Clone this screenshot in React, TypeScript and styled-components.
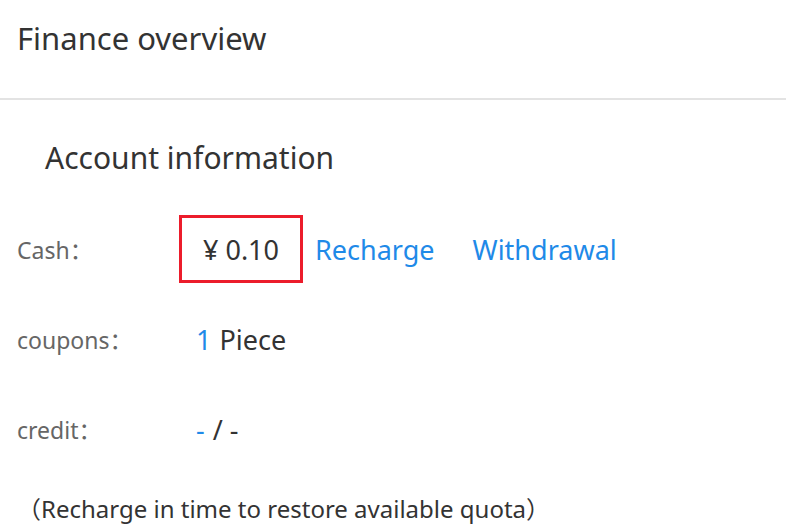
import React from "react";
import styled, { createGlobalStyle } from "styled-components";

const Global = createGlobalStyle`
  html, body { margin: 0; padding: 0; background: #fff; }
  body { font-family: "Noto Sans", "Noto Sans CJK SC", sans-serif; color: #333; }
`;

const Page = styled.div`
  width: 786px;
  height: 528px;
  overflow: hidden;
  background: #fff;
`;

const Header = styled.header`
  height: 100px;
  display: flex;
  align-items: center;
  padding-left: 17px;
  border-bottom: 2px solid #e3e3e3;
  box-sizing: border-box;
`;

const PageTitle = styled.h1`
  margin: -23px 0 0;
  font-size: 31px;
  font-weight: 400;
  color: #333;
`;

const Section = styled.section`
  padding: 0 17px;
`;

const SectionTitle = styled.h2`
  margin: 0;
  padding: 38px 0 0 28px;
  height: 80px;
  box-sizing: border-box;
  font-size: 30px;
  font-weight: 400;
  color: #333;
  line-height: 40px;
`;

const Rows = styled.div`
  padding-top: 24px;
`;

const Row = styled.div`
  display: grid;
  grid-template-columns: 179px 1fr;
  align-items: center;
  height: 90px;
`;

const Label = styled.span`
  font-size: 23px;
  color: #666;
`;

const Values = styled.div`
  display: flex;
  align-items: center;
  font-size: 27px;
  color: #333;
`;

const CashBox = styled.span`
  display: inline-flex;
  align-items: center;
  justify-content: center;
  width: 124px;
  height: 68px;
  box-sizing: border-box;
  border: 3px solid #ec1c2b;
  font-size: 27px;
  color: #333;
  margin-left: -17px;
  margin-right: 12px;
`;

const Link = styled.a<{ $gap?: number }>`
  color: #1f8ae8;
  text-decoration: none;
  margin-right: ${(p) => p.$gap ?? 0}px;
  cursor: pointer;
`;

const Accent = styled.span`
  color: #1f8ae8;
  margin-right: 8px;
`;

const Note = styled.p`
  margin: 16px 0 0;
  font-size: 24px;
  color: #333;
`;

export default function App() {
  return (
    <Page>
      <Global />
      <Header>
        <PageTitle>Finance overview</PageTitle>
      </Header>
      <Section>
        <SectionTitle>Account information</SectionTitle>
        <Rows>
          <Row>
            <Label>Cash：</Label>
            <Values>
              <CashBox>¥ 0.10</CashBox>
              <Link $gap={38}>Recharge</Link>
              <Link>Withdrawal</Link>
            </Values>
          </Row>
          <Row>
            <Label>coupons：</Label>
            <Values>
              <Accent>1</Accent>Piece
            </Values>
          </Row>
          <Row>
            <Label>credit：</Label>
            <Values>
              <Accent>-</Accent>/ -
            </Values>
          </Row>
        </Rows>
        <Note>（Recharge in time to restore available quota）</Note>
      </Section>
    </Page>
  );
}
